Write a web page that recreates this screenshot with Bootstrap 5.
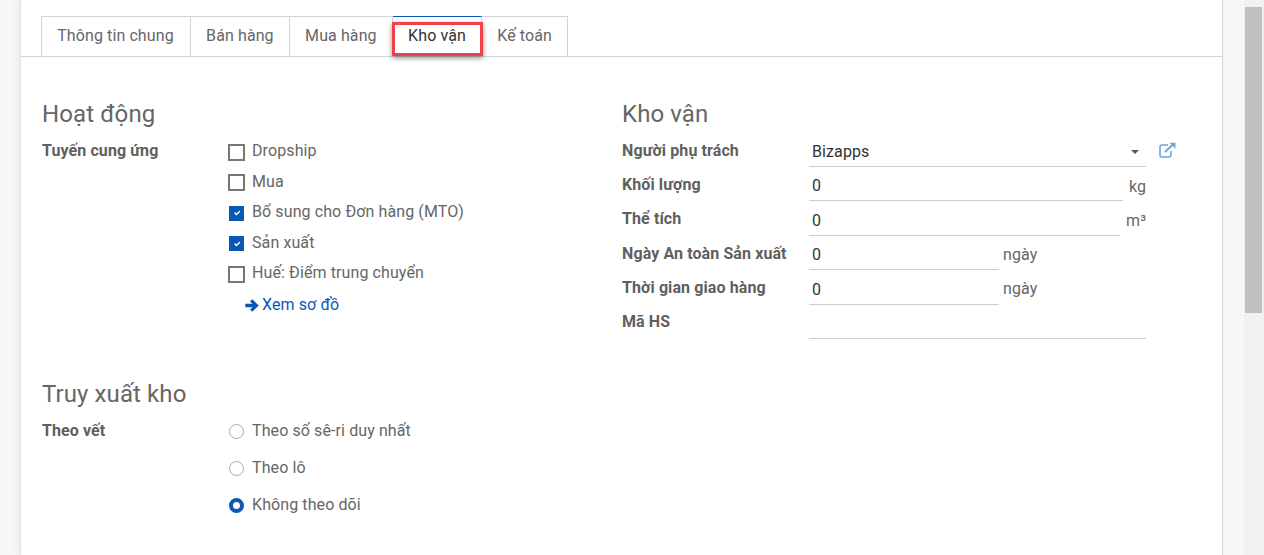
<!DOCTYPE html>
<html lang="vi">
<head>
  <meta charset="UTF-8">
  <meta name="viewport" content="width=device-width, initial-scale=1.0">
  <title>Kho vận</title>
  <link href="https://cdn.jsdelivr.net/npm/bootstrap@5.3.3/dist/css/bootstrap.min.css" rel="stylesheet">
  <style>
    html, body { height: 555px; overflow: hidden; }
    body { background: #f7f7f7; font-family: Roboto, "Liberation Sans", sans-serif; font-size: 16px; color: #666; letter-spacing: .1px; }
    .page-wrap { height: 555px; }
    .sheet { width: 1203px; margin-left: 20px; height: 555px; background: #fff; border-left: 1px solid #e3e3e3; border-right: 1px solid #d5d5d5; box-shadow: -3px 0 6px rgba(0,0,0,.05); position: relative; }
    .gutter { width: 21px; }
    .scroll-track { width: 20px; background: #f1f1f1; padding: 7px 2px 0 1px; }
    .scroll-thumb { height: 306px; background: #c1c1c1; }

    .tabs-bar { padding: 16px 0 0 20px; border-bottom: 1px solid #ced4da; height: 57px; }
    .tabs-bar .nav-link { color: #666; padding: 0 15.2px; height: 40px; line-height: 37px; border: 1px solid #ced4da; border-left: 0; border-bottom: 0; border-radius: 0; margin: 0; }
    .tabs-bar .nav-item:first-child .nav-link { border-left: 1px solid #ced4da; padding-right: 16.2px; }
    .tabs-bar .nav-link.active { color: #333; border-top: 1px solid #0a58b5; }
    .red-box { position: absolute; left: 371px; top: 22px; width: 91px; height: 34px; border: 3px solid #f0414a; box-shadow: 0 2px 5px rgba(0,0,0,.45); pointer-events: none; }

    .form-area { padding: 42px 0 0 21px; }
    .col-left { width: 580px; }
    .sec-title { font-size: 24px; font-weight: 400; color: #666; line-height: 30px; margin: 0; }
    .sec-second { margin-top: 58px; }
    .label-bold { font-weight: 700; color: #5f5f5f; }
    .label-left { width: 186px; padding-top: 2px; }
    .label-track { padding-top: 6px; }
    .check-row { height: 30.5px; gap: 7px; }
    .check-text { padding-bottom: 2px; }
    .form-check-input.tick { width: 17px; height: 17px; margin: 0; border: 2px solid #777; border-radius: 0; flex: none; }
    .form-check-input.tick:checked { width: 15px; height: 15px; margin: 0 1px; background-color: #0a58b5; border-color: #0a58b5; background-size: 10px; }
    .form-check-input.tick:focus, .form-check-input.dot:focus { box-shadow: none; }
    .form-check-input.dot { width: 15px; height: 15px; margin: 0 0 0 1px; border: 1px solid #aaa; flex: none; }
    .form-check-input.dot:checked { background-color: #fff; border: 4px solid #0a58b5; background-image: none; }
    .radio-row { height: 37px; gap: 8px; }
    .map-link { color: #0a58b5; text-decoration: none; padding-left: 17px; gap: 3px; height: 31px; }

    .field-row { height: 34.4px; }
    .label-right { width: 187px; padding-top: 1.5px; }
    .line-input { border: 0; border-bottom: 1px solid #ccc; border-radius: 0; padding: 0 3px; height: 30px; font-size: 16px; color: #333; background: transparent; font-family: inherit; line-height: 29px; letter-spacing: .1px; }
    .line-input:focus { box-shadow: none; border-color: #ccc; }
    .w-full { width: 337px; }
    .w-kg { width: 314px; }
    .w-m3 { width: 311px; }
    .w-day { width: 190px; }
    .unit-text { padding: 1.5px 0 0 4px; line-height: 26px; }
    .unit-wide { padding-left: 6px; padding-top: 2.5px; }
    .select-caret { position: absolute; left: 322px; top: 13px; width: 0; height: 0; border-left: 4.5px solid transparent; border-right: 4.5px solid transparent; border-top: 4.5px solid #555; }
    .ext-link { margin-left: 13px; padding-top: 5px; line-height: 0; }
  </style>
</head>
<body>
  <div class="page-wrap d-flex">
    <div class="sheet">
      <div class="tabs-bar">
        <ul class="nav">
          <li class="nav-item"><a class="nav-link" href="#">Thông tin chung</a></li>
          <li class="nav-item"><a class="nav-link" href="#">Bán hàng</a></li>
          <li class="nav-item"><a class="nav-link" href="#">Mua hàng</a></li>
          <li class="nav-item"><a class="nav-link active" href="#">Kho vận</a></li>
          <li class="nav-item"><a class="nav-link" href="#">Kế toán</a></li>
        </ul>
      </div>
      <div class="red-box"></div>

      <div class="form-area d-flex">
        <div class="col-left">
          <h2 class="sec-title mb-2">Hoạt động</h2>
          <div class="d-flex">
            <div class="label-left label-bold">Tuyến cung ứng</div>
            <div>
              <div class="d-flex align-items-center check-row"><input class="form-check-input tick" type="checkbox"><span class="check-text">Dropship</span></div>
              <div class="d-flex align-items-center check-row"><input class="form-check-input tick" type="checkbox"><span class="check-text">Mua</span></div>
              <div class="d-flex align-items-center check-row"><input class="form-check-input tick" type="checkbox" checked><span class="check-text">Bổ sung cho Đơn hàng (MTO)</span></div>
              <div class="d-flex align-items-center check-row"><input class="form-check-input tick" type="checkbox" checked><span class="check-text">Sản xuất</span></div>
              <div class="d-flex align-items-center check-row"><input class="form-check-input tick" type="checkbox"><span class="check-text">Huế: Điểm trung chuyển</span></div>
              <a class="map-link d-flex align-items-center" href="#">
                <svg width="14" height="13" viewBox="0 0 14 13"><path d="M7.2 .3 L13.8 6.5 L7.2 12.7 L5 10.6 L7.6 8.2 H.3 V4.8 H7.6 L5 2.4 Z" fill="#0a58b5"/></svg>
                <span>Xem sơ đồ</span>
              </a>
            </div>
          </div>
          <h2 class="sec-title sec-second mb-1">Truy xuất kho</h2>
          <div class="d-flex">
            <div class="label-left label-bold label-track">Theo vết</div>
            <div>
              <div class="d-flex align-items-center radio-row"><input class="form-check-input dot" type="radio" name="track"><span>Theo số sê-ri duy nhất</span></div>
              <div class="d-flex align-items-center radio-row"><input class="form-check-input dot" type="radio" name="track"><span>Theo lô</span></div>
              <div class="d-flex align-items-center radio-row"><input class="form-check-input dot" type="radio" name="track" checked><span>Không theo dõi</span></div>
            </div>
          </div>
        </div>

        <div class="col-right">
          <h2 class="sec-title mb-2">Kho vận</h2>
          <div class="d-flex field-row">
            <div class="label-right label-bold">Người phụ trách</div>
            <div class="position-relative"><input class="form-control line-input w-full" value="Bizapps"><span class="select-caret"></span></div>
            <a class="ext-link" href="#">
              <svg width="17" height="16" viewBox="0 0 17 16" fill="none" stroke="#6fa3e6" stroke-width="1.6"><path d="M9 3 H3 Q1 3 1 5 V13 Q1 15 3 15 H10 Q12 15 12 13 V9"/><path d="M6 10 L13.5 3" stroke-width="2"/><path d="M10.5 .8 H16.5 V6.8 Z" fill="#6fa3e6" stroke="none"/></svg>
            </a>
          </div>
          <div class="d-flex field-row">
            <div class="label-right label-bold">Khối lượng</div>
            <input class="form-control line-input w-kg" value="0"><span class="unit-text unit-wide">kg</span>
          </div>
          <div class="d-flex field-row">
            <div class="label-right label-bold">Thể tích</div>
            <input class="form-control line-input w-m3" value="0"><span class="unit-text unit-wide">m³</span>
          </div>
          <div class="d-flex field-row">
            <div class="label-right label-bold">Ngày An toàn Sản xuất</div>
            <input class="form-control line-input w-day" value="0"><span class="unit-text">ngày</span>
          </div>
          <div class="d-flex field-row">
            <div class="label-right label-bold">Thời gian giao hàng</div>
            <input class="form-control line-input w-day" value="0"><span class="unit-text">ngày</span>
          </div>
          <div class="d-flex field-row">
            <div class="label-right label-bold">Mã HS</div>
            <input class="form-control line-input w-full" value="">
          </div>
        </div>
      </div>
    </div>
    <div class="gutter"></div>
    <div class="scroll-track"><div class="scroll-thumb"></div></div>
  </div>
  <script src="https://cdn.jsdelivr.net/npm/bootstrap@5.3.3/dist/js/bootstrap.bundle.min.js"></script>
</body>
</html>
